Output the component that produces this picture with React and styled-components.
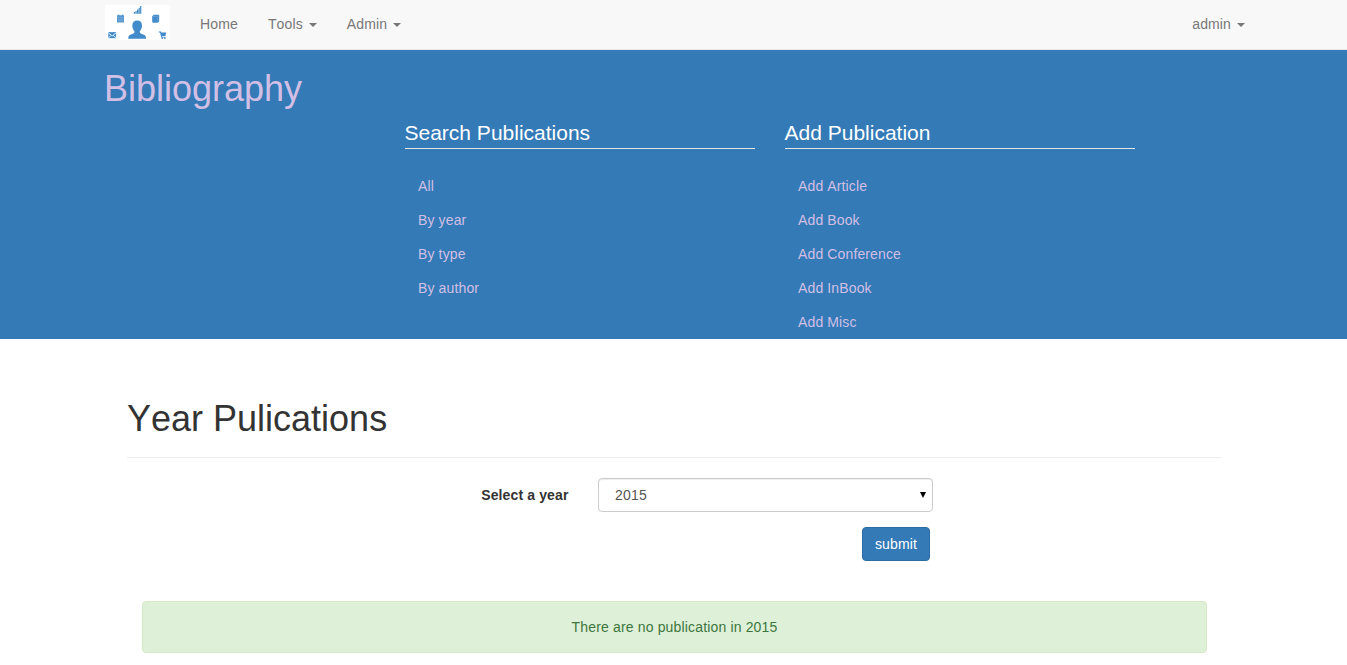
import React from "react";
import styled, { createGlobalStyle } from "styled-components";

const GlobalStyle = createGlobalStyle`
  *, *::before, *::after { box-sizing: border-box; }
  body {
    margin: 0;
    font: 14px/20px "Liberation Sans", Arial, sans-serif;
    font-kerning: none;
    letter-spacing: 0.13px;
    color: #333;
    background: #fff;
  }
`;

const Navbar = styled.nav`
  display: flex;
  height: 50px;
  padding: 0 87px 0 105px;
  background: #f8f8f8;
  border-bottom: 1px solid #e7e7e7;
`;

const Brand = styled.a`
  display: block;
  width: 65px;
  height: 35px;
  margin: 5px 15px 0 0;
`;

const NavItem = styled.a`
  display: flex;
  align-items: center;
  height: 48px;
  padding: 0 15px;
  color: #777;
  text-decoration: none;
  margin-left: ${(p) => (p.$right ? "auto" : "0")};
`;

const Caret = styled.span`
  margin: 2px 0 0 6px;
  border-top: 4px solid currentColor;
  border-left: 4px solid transparent;
  border-right: 4px solid transparent;
`;

const Banner = styled.header`
  height: 289px;
  padding: 19px 105px 0 104px;
  background: #337ab7;
`;

const BannerTitle = styled.h1`
  margin: 0;
  font-size: 36px;
  font-weight: 400;
  line-height: 40px;
  letter-spacing: 0;
  color: #d2bfe5;
`;

const Columns = styled.div`
  display: grid;
  grid-template-columns: 350px 350px;
  gap: 30px;
  margin: 9px 0 0 301px;
`;

const Legend = styled.h2`
  margin: 0 0 20px;
  font-size: 21px;
  font-weight: 400;
  line-height: 30px;
  letter-spacing: 0;
  text-indent: -0.5px;
  color: #fff;
  border-bottom: 1px solid #e5e5e5;
`;

const MenuLink = styled.a`
  display: block;
  padding: 7px 13px;
  color: #d2bfe5;
  text-decoration: none;
`;

const Main = styled.main`
  padding: 60px 125px 0 127px;
`;

const PageTitle = styled.h1`
  margin: 0 0 20px;
  padding-bottom: 19px;
  font-size: 36px;
  font-weight: 400;
  line-height: 39px;
  letter-spacing: 0;
  border-bottom: 1px solid #eee;
`;

const Form = styled.form`
  width: 806px;
`;

const Field = styled.div`
  display: flex;
  justify-content: flex-end;
  align-items: center;
  gap: 29.5px;
`;

const Label = styled.label`
  font-weight: 700;
`;

const Select = styled.div`
  display: flex;
  align-items: center;
  justify-content: space-between;
  width: 335px;
  height: 34px;
  padding: 0 6px 0 16px;
  letter-spacing: 0.25px;
  color: #555;
  border: 1px solid #ccc;
  border-radius: 4px;
  box-shadow: inset 0 1px 1px rgba(0, 0, 0, 0.075);
`;

const SelectArrow = styled.span`
  border-top: 6px solid #000;
  border-left: 3.5px solid transparent;
  border-right: 3.5px solid transparent;
`;

const Actions = styled.div`
  display: flex;
  justify-content: flex-end;
  padding: 15px 3px 0 0;
`;

const Submit = styled.button`
  width: 68px;
  height: 34px;
  padding: 0;
  font: inherit;
  font-kerning: none;
  letter-spacing: 0.15px;
  color: #fff;
  background: #337ab7;
  border: 1px solid #2e6da4;
  border-radius: 4px;
`;

const Alert = styled.div`
  margin: 40px 15px 0;
  padding: 15px;
  text-align: center;
  letter-spacing: 0.16px;
  color: #3c763d;
  background: #dff0d8;
  border: 1px solid #d6e9c6;
  border-radius: 4px;
`;

const Logo = () => (
  <svg width="65" height="35" viewBox="0 0 65 35" fill="#428bca">
    <rect width="65" height="35" fill="#fff" />
    {/* signal bars */}
    <path d="M28.8 7.1h1.3v1.7h-1.3zM30.4 5.9h1.3v2.9h-1.3zM32 4.5h1.3v4.3H32zM33.6 2.8h1.2v6h-1.2zM35.1 1.1h1.2v7.7h-1.2z" />
    {/* calendar */}
    <path d="M12 10.3h1.3V9.6h1v.7h2.6v-.7h1v.7H19v7.3h-7z" opacity=".92" />
    <path d="M12.3 12.5h6.4M12.5 14.3h6M12.5 15.9h6" stroke="#a9cbe8" strokeWidth=".4" />
    {/* book */}
    <path d="M47.2 11.2l1.7-1.5h5.3v6.7l-1.5 1.4h-4.5l-1-.9z" />
    <path d="M47.9 11.4h4.6l1.2-1.2M52.9 11.3v5.5" fill="none" stroke="#9cc4e6" strokeWidth=".4" />
    {/* person */}
    <path d="M32.2 15.6c3 0 4.8 1.8 4.8 5.2 0 2.2-.9 4-2.1 5.1v1.5c.5 1.1 2.2 1.6 4 2.3 1.5.6 2.1 1.7 2.2 4H23.2c.1-2.3.7-3.4 2.2-4 1.8-.7 3.5-1.2 4-2.3v-1.5c-1.2-1.1-2.1-2.9-2.1-5.1 0-3.4 1.9-5.2 4.9-5.2z" />
    {/* envelope */}
    <path d="M3.3 27.1h7.8v6.1H3.3z" />
    <path d="M3.3 27.9l3.9 3 3.9-3M3.5 33l2.6-2.7M10.9 33l-2.6-2.7" fill="none" stroke="#fff" strokeWidth=".8" />
    {/* shopping cart */}
    <path d="M53.7 26.4h2.2l.4 1.1h4.9l-.8 3.6h-3.5l.2.6h3.5v.8h-4.3l-1.3-5.1h-1.3z" />
    <circle cx="57.2" cy="33.1" r=".9" />
    <circle cx="59.9" cy="33.1" r=".9" />
  </svg>
);

const searchLinks = ["All", "By year", "By type", "By author"];
const addLinks = ["Add Article", "Add Book", "Add Conference", "Add InBook", "Add Misc"];

const Menu = ({ title, links }) => (
  <section>
    <Legend>{title}</Legend>
    {links.map((link) => (
      <MenuLink key={link}>{link}</MenuLink>
    ))}
  </section>
);

export default function App() {
  return (
    <>
      <GlobalStyle />
      <Navbar>
        <Brand><Logo /></Brand>
        <NavItem>Home</NavItem>
        <NavItem>Tools<Caret /></NavItem>
        <NavItem>Admin<Caret /></NavItem>
        <NavItem $right>admin<Caret /></NavItem>
      </Navbar>
      <Banner>
        <BannerTitle>Bibliography</BannerTitle>
        <Columns>
          <Menu title="Search Publications" links={searchLinks} />
          <Menu title="Add Publication" links={addLinks} />
        </Columns>
      </Banner>
      <Main>
        <PageTitle>Year Pulications</PageTitle>
        <Form>
          <Field>
            <Label>Select a year</Label>
            <Select>2015<SelectArrow /></Select>
          </Field>
          <Actions>
            <Submit type="button">submit</Submit>
          </Actions>
        </Form>
        <Alert>There are no publication in 2015</Alert>
      </Main>
    </>
  );
}
